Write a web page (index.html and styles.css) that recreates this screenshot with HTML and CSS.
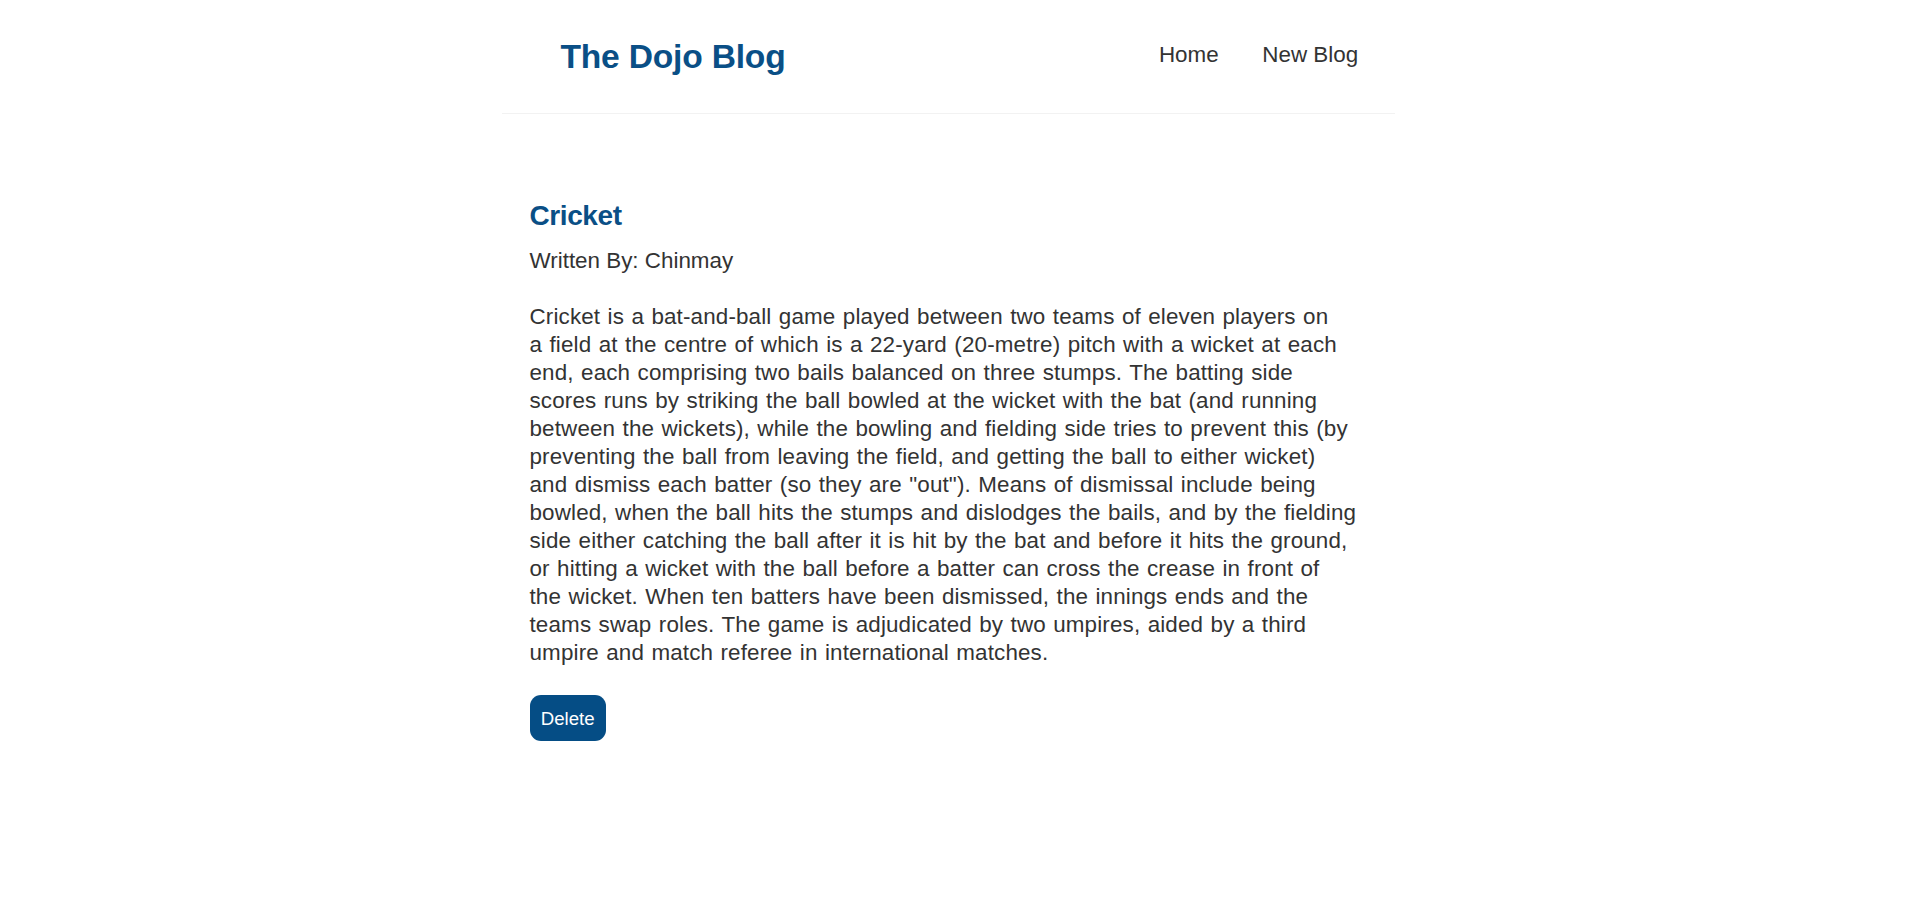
FILE: index.html
```html
<!DOCTYPE html>
<html lang="en">
<head>
<meta charset="utf-8">
<title>The Dojo Blog</title>
<link rel="stylesheet" href="styles.css">
</head>
<body>
  <div class="app">
    <nav class="navbar">
      <h1>The Dojo Blog</h1>
      <div class="links">
        <a href="#">Home</a>
        <a href="#">New Blog</a>
      </div>
    </nav>
    <div class="content">
      <div class="blog-details">
        <article>
          <h2>Cricket</h2>
          <p>Written By: Chinmay</p>
          <div class="body">Cricket is a bat-and-ball game played between two teams of eleven players on<br>
a field at the centre of which is a 22-yard (20-metre) pitch with a wicket at each<br>
end, each comprising two bails balanced on three stumps. The batting side<br>
scores runs by striking the ball bowled at the wicket with the bat (and running<br>
between the wickets), while the bowling and fielding side tries to prevent this (by<br>
preventing the ball from leaving the field, and getting the ball to either wicket)<br>
and dismiss each batter (so they are "out"). Means of dismissal include being<br>
bowled, when the ball hits the stumps and dislodges the bails, and by the fielding<br>
side either catching the ball after it is hit by the bat and before it hits the ground,<br>
or hitting a wicket with the ball before a batter can cross the crease in front of<br>
the wicket. When ten batters have been dismissed, the innings ends and the<br>
teams swap roles. The game is adjudicated by two umpires, aided by a third<br>
umpire and match referee in international matches.</div>
          <button class="delete">Delete</button>
        </article>
      </div>
    </div>
  </div>
</body>
</html>
```

FILE: styles.css
```css
* {
  margin: 0;
  font-family: "Liberation Sans", Arial, sans-serif;
  color: #333;
  box-sizing: content-box;
}
body {
  background: #fff;
  padding-right: 10px;
}
.navbar {
  padding: 28px;
  display: flex;
  align-items: center;
  max-width: 837px;
  margin: 0 auto;
  border-bottom: 1px solid #f2f2f2;
}
.navbar h1 {
  color: #0a4f86;
  font-size: 33.6px;
  line-height: 57px;
  font-weight: bold;
  letter-spacing: -0.2px;
  margin-left: 31px;
}
.navbar .links {
  margin-left: auto;
  margin-top: -3px;
}
.navbar a {
  margin-left: 22.4px;
  text-decoration: none;
  padding: 8.4px;
  font-size: 22.4px;
  line-height: 1.25;
  color: #333;
}
.content {
  max-width: 837px;
  margin: 56px auto;
  padding: 28px;
}
.blog-details h2 {
  font-size: 28px;
  line-height: 1.25;
  color: #0a4f86;
  margin-bottom: 14px;
  letter-spacing: -0.4px;
  font-weight: bold;
}
.blog-details p,
.blog-details .body {
  font-size: 22.4px;
  line-height: 1.25;
}
.blog-details .body {
  margin: 28px 0;
  word-spacing: 1px;
  letter-spacing: 0.15px;
}
.delete {
  background: #054d85;
  color: #fff;
  border: 0;
  padding: 11.5px 11.2px;
  border-radius: 11px;
  font-size: 18.67px;
  line-height: 23px;
  cursor: pointer;
}
```
